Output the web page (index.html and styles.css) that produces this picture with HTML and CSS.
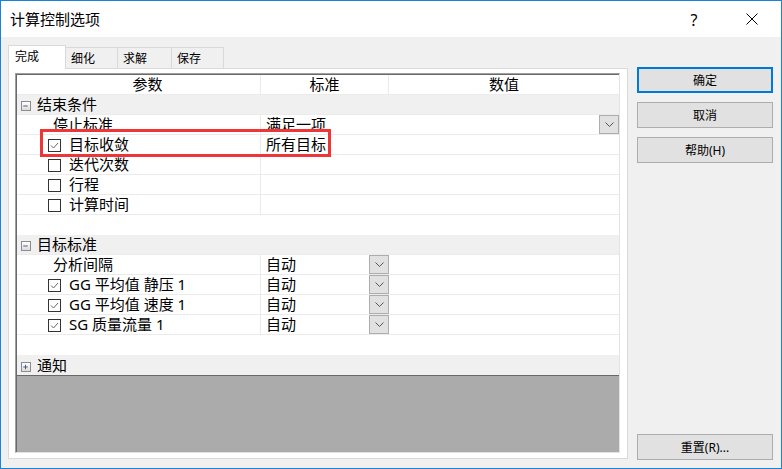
FILE: index.html
```html
<!DOCTYPE html>
<html>
<head>
  <meta charset="utf-8">
  <title>计算控制选项</title>
  <link rel="stylesheet" href="styles.css">
</head>
<body>
  <div class="window">
    <div class="titlebar">
      <span class="title">计算控制选项</span>
      <span class="cap-btn help">?</span>
      <span class="cap-btn">
        <svg width="12" height="12" viewBox="0 0 12 12"><path d="M0.5 0.5 L11.5 11.5 M11.5 0.5 L0.5 11.5" stroke="#000" stroke-width="1" fill="none"/></svg>
      </span>
    </div>

    <div class="dlg-body">
      <div class="left">
        <div class="tabs">
          <div class="tab active">完成</div>
          <div class="tab">细化</div>
          <div class="tab">求解</div>
          <div class="tab">保存</div>
        </div>
        <div class="panel">
          <div class="grid">
            <div class="grid-in">
              <div class="row head">
                <div class="c1">参数</div>
                <div class="c2">标准</div>
                <div class="c3">数值</div>
              </div>

              <div class="row cat">
                <span class="exp"><svg width="10" height="10" viewBox="0 0 10 10"><path d="M2.5 5 H7.5" stroke="#3c4f8f" stroke-width="1"/></svg></span>
                结束条件
              </div>
              <div class="row">
                <div class="c1"><span class="lbl">停止标准</span></div>
                <div class="c23">满足一项<span class="drop"><svg width="9" height="5" viewBox="0 0 9 5"><path d="M0.5 0.5 L4.5 4.5 L8.5 0.5" stroke="#555" fill="none"/></svg></span></div>
              </div>
              <div class="row">
                <div class="c1"><span class="chk on"><svg width="11" height="11" viewBox="0 0 11 11"><path d="M2 5.5 L4.5 8 L9 3" fill="none" stroke="#666" stroke-width="1"/></svg></span>目标收敛</div>
                <div class="c23">所有目标</div>
              </div>
              <div class="row">
                <div class="c1"><span class="chk"></span>迭代次数</div>
                <div class="c23"></div>
              </div>
              <div class="row">
                <div class="c1"><span class="chk"></span>行程</div>
                <div class="c23"></div>
              </div>
              <div class="row">
                <div class="c1"><span class="chk"></span>计算时间</div>
                <div class="c23"></div>
              </div>
              <div class="row blank"></div>

              <div class="row cat">
                <span class="exp"><svg width="10" height="10" viewBox="0 0 10 10"><path d="M2.5 5 H7.5" stroke="#3c4f8f" stroke-width="1"/></svg></span>
                目标标准
              </div>
              <div class="row">
                <div class="c1"><span class="lbl">分析间隔</span></div>
                <div class="c2">自动<span class="drop"><svg width="9" height="5" viewBox="0 0 9 5"><path d="M0.5 0.5 L4.5 4.5 L8.5 0.5" stroke="#555" fill="none"/></svg></span></div>
                <div class="c3"></div>
              </div>
              <div class="row">
                <div class="c1"><span class="chk on"><svg width="11" height="11" viewBox="0 0 11 11"><path d="M2 5.5 L4.5 8 L9 3" fill="none" stroke="#666" stroke-width="1"/></svg></span>GG 平均值 静压 1</div>
                <div class="c2">自动<span class="drop"><svg width="9" height="5" viewBox="0 0 9 5"><path d="M0.5 0.5 L4.5 4.5 L8.5 0.5" stroke="#555" fill="none"/></svg></span></div>
                <div class="c3"></div>
              </div>
              <div class="row">
                <div class="c1"><span class="chk on"><svg width="11" height="11" viewBox="0 0 11 11"><path d="M2 5.5 L4.5 8 L9 3" fill="none" stroke="#666" stroke-width="1"/></svg></span>GG 平均值 速度 1</div>
                <div class="c2">自动<span class="drop"><svg width="9" height="5" viewBox="0 0 9 5"><path d="M0.5 0.5 L4.5 4.5 L8.5 0.5" stroke="#555" fill="none"/></svg></span></div>
                <div class="c3"></div>
              </div>
              <div class="row">
                <div class="c1"><span class="chk on"><svg width="11" height="11" viewBox="0 0 11 11"><path d="M2 5.5 L4.5 8 L9 3" fill="none" stroke="#666" stroke-width="1"/></svg></span>SG 质量流量 1</div>
                <div class="c2">自动<span class="drop"><svg width="9" height="5" viewBox="0 0 9 5"><path d="M0.5 0.5 L4.5 4.5 L8.5 0.5" stroke="#555" fill="none"/></svg></span></div>
                <div class="c3"></div>
              </div>
              <div class="row blank"></div>

              <div class="row cat last">
                <span class="exp"><svg width="10" height="10" viewBox="0 0 10 10"><path d="M2.5 5 H7.5 M5 2.5 V7.5" stroke="#3c4f8f" stroke-width="1"/></svg></span>
                通知
              </div>
              <div class="empty"></div>
            </div>
          </div>
        </div>
      </div>

      <div class="right">
        <button class="btn default">确定</button>
        <button class="btn">取消</button>
        <button class="btn">帮助(H)</button>
        <button class="btn reset">重置(R)...</button>
      </div>
    </div>

    <!-- highlight around the convergence row -->
    <div class="mark"></div>
  </div>
</body>
</html>
```

FILE: styles.css
```css
body {
    margin: 0;
    padding: 0;
    font-family: "Noto Sans", "Noto Sans CJK SC", sans-serif;
    color: #000;
}
.window {
    position: relative;
    width: 782px;
    height: 469px;
    box-sizing: border-box;
    border: 1px solid #1883d7;
    background: #f0f0f0;
}
.titlebar {
    display: flex;
    align-items: center;
    height: 36px;
    background: #fff;
}
.title {
    flex: 1;
    padding-left: 9px;
    font-size: 15px;
    line-height: 20px;
}
.cap-btn {
    width: 58px;
    height: 36px;
    display: flex;
    align-items: center;
    justify-content: center;
}
.help {
    font-size: 16px;
    padding-top: 1px;
}

.dlg-body {
    display: flex;
    gap: 9px;
    height: 431px;
    box-sizing: border-box;
    padding: 8px 8px 9px 7px;
}
.left {
    width: 620px;
    display: flex;
    flex-direction: column;
}
.tabs {
    display: flex;
    align-items: flex-end;
    height: 23px;
}
.tab {
    box-sizing: border-box;
    height: 21px;
    padding: 3px 0 0 5px;
    font-size: 12px;
    line-height: 16px;
    border: 1px solid #d9d9d9;
    border-left: 0;
    border-bottom: 0;
    background: #f0f0f0;
}
.tab:nth-child(2) { width: 52px; }
.tab:nth-child(3) { width: 54px; }
.tab:nth-child(4) { width: 52px; }
.tab.active {
    position: relative;
    z-index: 1;
    width: 58px;
    height: 24px;
    margin-bottom: -1px;
    padding: 3px 0 0 6px;
    border-left: 1px solid #d9d9d9;
    background: #fff;
}
.panel {
    height: 391px;
    box-sizing: border-box;
    border: 1px solid #d9d9d9;
    background: #fff;
    padding: 4px 7px 5px 6px;
}

/* property grid */
.grid {
    width: 605px;
    height: 380px;
    box-sizing: border-box;
    border: 1px solid #e3e3e3;
    border-top-color: #a0a0a0;
    border-left-color: #a0a0a0;
}
.grid-in {
    height: 100%;
    box-sizing: border-box;
    border-top: 1px solid #696969;
    border-left: 1px solid #696969;
    display: flex;
    flex-direction: column;
    font-size: 15px;
}
.row {
    display: flex;
    height: 20px;
    flex-shrink: 0;
    box-sizing: border-box;
    border-bottom: 1px solid #ebebeb;
    line-height: 19px;
}
.row.blank {
    border-bottom: 0;
}
.c1 {
    width: 244px;
    box-sizing: border-box;
    border-right: 1px solid #ebebeb;
    display: flex;
    align-items: center;
    padding-left: 31px;
}
.c2 {
    width: 128px;
    box-sizing: border-box;
    display: flex;
    padding-left: 5px;
}
.c3 {
    flex: 1;
}
.c23 {
    flex: 1;
    display: flex;
    padding-left: 5px;
}
.head .c1 {
    justify-content: center;
    padding-left: 18px;
}
.head .c2 {
    justify-content: center;
    padding-left: 0;
    border-right: 1px solid #ebebeb;
}
.head .c3 {
    text-align: center;
}
.lbl {
    padding-left: 5px;
}
.chk {
    width: 13px;
    height: 13px;
    box-sizing: border-box;
    border: 1px solid #333;
    margin: 2px 8px 0 0;
    display: flex;
}
.drop {
    margin-left: auto;
    width: 20px;
    height: 19px;
    box-sizing: border-box;
    border: 1px solid #adadad;
    background: #e1e1e1;
    display: flex;
    align-items: center;
    justify-content: center;
}
.cat {
    background: #f0f0f0;
    align-items: center;
    padding-left: 4px;
}
.cat.last {
    border-bottom: 0;
}
.exp {
    width: 10px;
    height: 10px;
    box-sizing: border-box;
    border: 1px solid #8c8c8c;
    background: linear-gradient(#fff, #dcdcdc);
    margin: 3px 6px 0 0;
    display: flex;
}
.exp svg {
    margin: -1px 0 0 -1px;
}
.empty {
    flex: 1;
    border-top: 1px solid #696969;
    background: #ababab;
}

/* buttons on the right */
.right {
    width: 136px;
    display: flex;
    flex-direction: column;
    gap: 9px;
    padding-top: 22px;
}
.btn {
    height: 26px;
    box-sizing: border-box;
    border: 1px solid #adadad;
    background: #e1e1e1;
    font-family: "Noto Sans", "Noto Sans CJK SC", sans-serif;
    font-size: 12px;
    color: #000;
    padding: 0;
}
.btn.default {
    border: 2px solid #0078d7;
}
.btn.reset {
    margin-top: auto;
    margin-bottom: -1px;
}

.mark {
    position: absolute;
    left: 39px;
    top: 128px;
    width: 291px;
    height: 28px;
    box-sizing: border-box;
    border: 3px solid #ef3535;
}
```
